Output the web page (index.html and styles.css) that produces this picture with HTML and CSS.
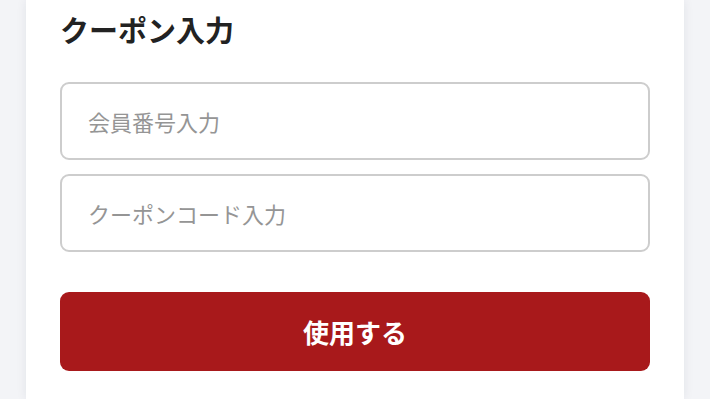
FILE: index.html
```html
<!DOCTYPE html>
<html lang="ja">
<head>
<meta charset="utf-8">
<link rel="stylesheet" href="styles.css">
</head>
<body>
<div class="page">
  <section class="card">
    <h1 class="title">クーポン入力</h1>
    <form class="form">
      <input class="field" type="text" placeholder="会員番号入力">
      <input class="field" type="text" placeholder="クーポンコード入力">
      <button class="submit" type="button">使用する</button>
    </form>
  </section>
</div>
</body>
</html>
```

FILE: styles.css
```css
html, body {
  margin: 0;
  padding: 0;
  height: 100%;
}
body {
  background: #f3f4f7;
  font-family: "Noto Sans CJK JP", "Noto Sans", sans-serif;
  overflow: hidden;
}
.page {
  padding: 0 26px;
  height: 100%;
}
.card {
  background: #fff;
  height: 100%;
  box-sizing: border-box;
  padding: 9px 34px 0;
  box-shadow: 0 0 10px rgba(30, 40, 70, 0.08);
}
.title {
  margin: 0 0 33px;
  font-size: 29px;
  line-height: 40px;
  font-weight: 700;
  color: #222;
}
.form {
  display: flex;
  flex-direction: column;
}
.field {
  height: 78px;
  box-sizing: border-box;
  border: 2px solid #cdcdcd;
  border-radius: 9px;
  padding: 0 26px;
  font-family: "Noto Sans CJK JP", "Noto Sans", sans-serif;
  font-size: 22px;
  color: #333;
  background: #fff;
  outline: none;
}
.field + .field {
  margin-top: 14px;
}
.field::placeholder {
  color: #959595;
}
.submit {
  margin-top: 40px;
  height: 79px;
  border: none;
  border-radius: 9px;
  background: #a8191b;
  color: #fff;
  font-family: "Noto Sans CJK JP", "Noto Sans", sans-serif;
  font-size: 26px;
  font-weight: 700;
}
```
